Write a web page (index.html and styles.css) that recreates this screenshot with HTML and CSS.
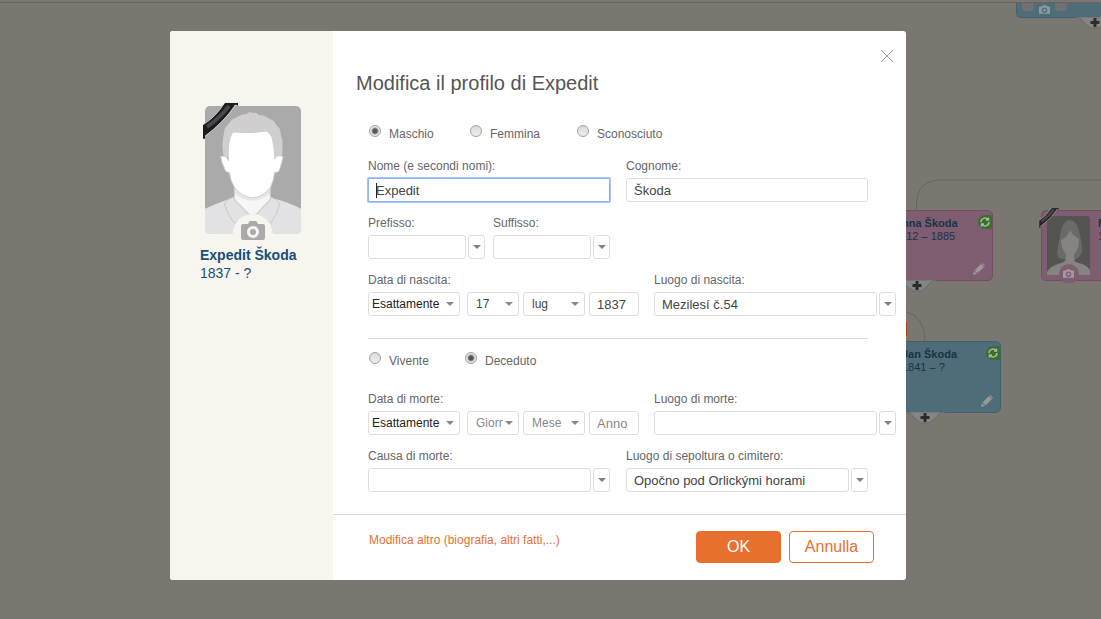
FILE: index.html
```html
<!DOCTYPE html>
<html lang="it">
<head>
<meta charset="utf-8">
<title>Modifica il profilo di Expedit</title>
<meta name="viewport" content="width=device-width, initial-scale=1">
<link rel="stylesheet" href="styles.css">
</head>
<body>
<svg class="defs" aria-hidden="true">
  <symbol id="camera" viewBox="0 0 24 19"><path fill-rule="evenodd" d="M2 3h5l1-2q.5-1 1.500-1h5q1 0 1.500 1l1 2h5q2 0 2 2v12q0 2-2 2H2q-2 0-2-2V5q0-2 2-2zM12 5a6 6 0 1 0 0 12a6 6 0 1 0 0-12zm0 3a3 3 0 1 1 0 6a3 3 0 1 1 0-6z"/></symbol>
  <symbol id="pencil" viewBox="0 0 12 12"><path d="M0 12l1-4 3 3zM1.600 7.300L8 .9l3 3-6.400 6.400zM8.600.4q.6-.6 1.200 0l1.800 1.800q.6.600 0 1.200z"/></symbol>
  <symbol id="plus" viewBox="0 0 40 12"><path class="tab" d="M0 0h40q-5 0-8 4t-8 7h-8q-5-3-8-7t-8-4z"/><path class="cross" d="M18.500 1h3v3h3v3h-3v3h-3v-3h-3v-3h3z"/></symbol>
  <symbol id="match" viewBox="0 0 14 14"><path class="badge" d="M7 0h5q2 0 2 2v12H7a7 7 0 0 1 0-14z"/><path class="arrows" d="M3 7a4 4 0 0 1 7-2.500M11 7a4 4 0 0 1-7 2.500M10.500 2.500v2.500H8M3.500 11.500V9H6"/></symbol>
  <symbol id="ribbon" viewBox="0 0 35 36"><path d="M22 0h13v3l-3-1Q20 20 2 33v3H0V22Q13 14 22 0z" fill="#1c1b1e"/><path d="M4 24Q17 15 26 3" fill="none" stroke="#47464a" stroke-width="4"/><path d="M21.500 0Q13 14 0 22M33 2Q20 20 2 33.500" fill="none" stroke="#d8d6d2" stroke-width=".8"/></symbol>
</svg>

<div class="tree" aria-hidden="true">
  <svg class="wires" width="1101" height="619">
    <path d="M0 2.500h1101M916.500 210v-5q0-25 25-25h160M906 311.500q19 5 19 30"/>
    <path class="mark" d="M906 322v14"/>
  </svg>
  <div class="node male top"><i></i><svg class="cam"><use href="#camera"/></svg><i></i><svg class="add"><use href="#plus"/></svg></div>
  <div class="node female anna"><b>Anna Škoda</b><span>1812 – 1885</span><svg class="sync"><use href="#match"/></svg><svg class="edit"><use href="#pencil"/></svg><svg class="add"><use href="#plus"/></svg></div>
  <div class="node male jan"><b>Jan Škoda</b><span>1841 – ?</span><svg class="sync"><use href="#match"/></svg><svg class="edit"><use href="#pencil"/></svg><svg class="add"><use href="#plus"/></svg></div>
  <div class="node female maria">
    <svg class="portrait" viewBox="0 0 62 76">
      <rect x="5" y="9" width="43" height="59" rx="3" fill="#545452"/>
      <path d="M17 51q-3-3-1-12t3-16q3-10 9-10t9 11q2 8 3 15t-2 10q-6 6-10 5t-11-3z" fill="#6b6a69"/>
      <path d="M5 65q3-6 14-9 5-1 5-5v-4q-5-6-5-14 7-3 9-10 2 5 9 9 0 11-5 15v5q0 3 5 4 8 2 11 7v5H5z" fill="#858482"/>
      <circle cx="27" cy="67" r="10" fill="#7e5d70"/>
      <svg x="21" y="62" width="11" height="9"><use href="#camera" fill="#a19a9e"/></svg>
    </svg>
    <svg class="mourning"><use href="#ribbon"/></svg>
    <b>M</b><span>1</span>
  </div>
</div>

<div class="overlay">
  <section class="dialog" role="dialog" aria-labelledby="title">
    <aside class="person">
      <svg class="avatar" viewBox="0 0 312 438" role="img" aria-label="Foto del profilo">
        <defs><clipPath id="frame"><rect x="15" y="18" width="288" height="384" rx="15"/></clipPath></defs>
        <g clip-path="url(#frame)">
          <rect width="312" height="438" fill="#aaa"/>
          <path d="M15 326q35-16 83-33l16-18h88l13 18q52 14 88 33v80H15z" fill="#e2e1e3"/>
          <path d="M103 250h108v44l-45 48q-8 8-17 0l-46-48z" fill="#f6f6f6"/>
          <path d="M103 262q25 33 55 33t53-33v18q-23 22-53 22t-55-22z" fill="#e6e6e6"/>
          <path d="M103 260v40l44 44-44 26q-20-25-30-58 8-15 26-21M211 260v40l-43 44 44 26q19-25 27-58-8-15-26-21" fill="none" stroke="#c8c8ca" stroke-width="3"/>
          <path d="M72 172q-8-28-2-62l4-24 12-15 10-12 20-10 8-5 15-2 10-6 8 2 12 1 8 6 16 2 15 9 13 6 10 16 9 9 3 20 4 13q3 30-3 54z" fill="#d0cecf"/>
          <path d="M104 96q50 5 97-3 9 8 15 18 6 24 9 66 2-14 24-8-3 18-9 36-3 14-16 12-3 26-13 46-25 30-53 30t-54-30q-13-20-16-46-12 1-14-10-9-18-12-38 19-3 23 13-3-60 12-84z" fill="#fff" stroke="#cfcdce" stroke-width="3"/>
        </g>
        <circle cx="158" cy="402" r="60" fill="#f8f5ee"/>
        <svg x="123" y="363" width="72" height="57"><use href="#camera" fill="#aaa"/></svg>
        <svg x="9" y="8" width="105" height="109"><use href="#ribbon"/></svg>
      </svg>
      <strong>Expedit Škoda</strong>
      <span>1837 - ?</span>
    </aside>

    <form class="main">
      <header class="head">
        <h1 id="title">Modifica il profilo di Expedit</h1>
        <button type="button" class="close" aria-label="Chiudi"><svg viewBox="0 0 14 14"><path d="M1 1l12 12M13 1L1 13"/></svg></button>
      </header>

      <div class="body">
        <div class="radios sex">
          <label><input type="radio" name="sex" checked><span>Maschio</span></label>
          <label><input type="radio" name="sex"><span>Femmina</span></label>
          <label><input type="radio" name="sex"><span>Sconosciuto</span></label>
        </div>

        <div class="row halves">
          <div class="field"><label for="first">Nome (e secondi nomi):</label><div class="control active"><input id="first" type="text" value="Expedit"></div></div>
          <div class="field"><label for="last">Cognome:</label><input id="last" type="text" value="Škoda"></div>
        </div>

        <div class="row halves">
          <div class="pair">
            <div class="field"><label for="prefix">Prefisso:</label><div class="combo"><input id="prefix" type="text"><button type="button" aria-label="Elenco prefissi"></button></div></div>
            <div class="field"><label for="suffix">Suffisso:</label><div class="combo"><input id="suffix" type="text"><button type="button" aria-label="Elenco suffissi"></button></div></div>
          </div>
        </div>

        <div class="row event">
          <div class="field"><label for="bkind">Data di nascita:</label>
            <div class="date">
              <div class="pick kind"><select id="bkind"><option>Esattamente</option></select></div>
              <div class="pick day"><select aria-label="Giorno"><option>17</option></select></div>
              <div class="pick month"><select aria-label="Mese"><option>lug</option></select></div>
              <input class="year" type="text" aria-label="Anno" value="1837">
            </div>
          </div>
          <div class="field place"><label for="bplace">Luogo di nascita:</label><div class="combo"><input id="bplace" type="text" value="Mezilesí č.54"><button type="button" aria-label="Elenco luoghi"></button></div></div>
        </div>

        <hr>

        <div class="radios life">
          <label><input type="radio" name="life"><span>Vivente</span></label>
          <label><input type="radio" name="life" checked><span>Deceduto</span></label>
        </div>

        <div class="row event">
          <div class="field"><label for="dkind">Data di morte:</label>
            <div class="date">
              <div class="pick kind"><select id="dkind"><option>Esattamente</option></select></div>
              <div class="pick day empty"><select aria-label="Giorno"><option>Giorno</option></select></div>
              <div class="pick month empty"><select aria-label="Mese"><option>Mese</option></select></div>
              <input class="year" type="text" aria-label="Anno" placeholder="Anno">
            </div>
          </div>
          <div class="field place"><label for="dplace">Luogo di morte:</label><div class="combo"><input id="dplace" type="text"><button type="button" aria-label="Elenco luoghi"></button></div></div>
        </div>

        <div class="row halves">
          <div class="field"><label for="cause">Causa di morte:</label><div class="combo"><input id="cause" type="text"><button type="button" aria-label="Elenco cause"></button></div></div>
          <div class="field"><label for="burial">Luogo di sepoltura o cimitero:</label><div class="combo"><input id="burial" type="text" value="Opočno pod Orlickými horami"><button type="button" aria-label="Elenco cimiteri"></button></div></div>
        </div>
      </div>

      <footer class="foot">
        <a href="#">Modifica altro (biografia, altri fatti,...)</a>
        <button type="button" class="btn ok">OK</button>
        <button type="button" class="btn">Annulla</button>
      </footer>
    </form>
  </section>
</div>
</body>
</html>
```
FILE: styles.css
```css
*, *::before, *::after { box-sizing: border-box; }

body {
  margin: 0;
  min-height: 100vh;
  overflow: hidden;
  background: #797770;
  color: #666;
  font: 12px/16px "Liberation Sans", Arial, sans-serif;
}

input, select, button { font: inherit; margin: 0; }
.defs { position: absolute; width: 0; height: 0; }

/* Family tree canvas behind the dialog */
.tree { position: absolute; inset: 0; overflow: hidden; }
.wires { position: absolute; left: 0; top: 0; fill: none; stroke: #66645f; }
.wires .mark { stroke: #9a4313; stroke-width: 2; }
.node {
  position: absolute;
  width: 170px;
  height: 71px;
  padding: 6px 0 0 70px;
  border: 1px solid;
  border-radius: 5px;
  color: #18334a;
  font-size: 11px;
  line-height: 13px;
  white-space: nowrap;
}
.node b, .node span { display: block; }
.male { background: #4f6d78; border-color: #3f626f; }
.female { background: #7e5d70; border-color: #704f62; }
.anna { left: 823px; top: 210px; }
.jan { left: 831px; top: 341px; height: 72px; }
.maria { left: 1041px; top: 210px; padding-left: 56px; }
.top { left: 1016px; top: 3px; height: 15px; padding: 0 0 0 5px; border-top: 0; border-radius: 0 0 5px 5px; display: flex; gap: 5px; }
.top i { width: 12px; height: 8px; background: #706f72; border-radius: 0 0 3px 3px; }
.top .cam { width: 11px; height: 9px; margin-top: 2px; fill: #8c9a9f; }
.sync { position: absolute; right: 0; top: 4px; width: 14px; height: 14px; }
.edit { position: absolute; right: 7px; bottom: 5px; width: 12px; height: 12px; fill: #99979a; }
.add { position: absolute; top: 100%; left: 73px; width: 40px; height: 12px; }
.top .add { left: 58px; }
.tab { fill: #868586; stroke: #6c6b69; }
.cross { fill: #2c2c2c; }
.badge { fill: #39702a; }
.arrows { fill: none; stroke: #aab5a3; stroke-width: 1.5; }
.portrait { position: absolute; left: 0; top: -4px; width: 62px; height: 76px; }
.mourning { position: absolute; left: -3px; top: -3px; width: 20px; height: 20px; opacity: .85; }

/* Dialog */
.overlay { position: relative; display: flex; justify-content: center; padding: 31px 25px 39px 0; }
.dialog { display: flex; width: 100%; max-width: 736px; background: #fff; border-radius: 3px; overflow: hidden; }

.person {
  display: flex;
  flex: 0 0 163px;
  flex-direction: column;
  padding: 69px 20px 0 30px;
  background: #f8f5ee;
  color: #14507d;
  font-size: 14px;
  line-height: 18px;
}
.avatar { width: 104px; height: 146px; }

.main { flex: 1; min-width: 0; }
.head { display: flex; justify-content: space-between; align-items: flex-start; padding: 18px 12px 0 23px; }
h1 { margin: 22px 0 0; color: #555; font-size: 20px; font-weight: 400; line-height: 24px; }
.close { width: 14px; height: 14px; padding: 0; border: 0; background: none; }
.close svg { display: block; fill: none; stroke: #999; }

.body { padding: 30px 38px 22px 35px; }
.radios { display: grid; padding-left: 1px; }
.sex { grid-template-columns: 101px 107px auto; }
.life { grid-template-columns: 96px auto; }
.radios label { display: flex; gap: 8px; }
.radios span { padding-top: 1px; }
.radios input {
  appearance: none;
  width: 12px;
  height: 12px;
  border: 1px solid #a2a2a2;
  border-radius: 50%;
  background: linear-gradient(#d9d9d9, #eee);
}
.radios input:checked { background: radial-gradient(circle, #555 0 2px, #e4e4e4 4px); }

.row { display: grid; margin-top: 13px; }
.sex + .row { margin-top: 16px; }
.life + .row { margin-top: 22px; }
.halves { grid-template-columns: 1fr 1fr; gap: 16px; }
.pair { display: grid; grid-template-columns: 1fr 1fr; gap: 8px; }
.event { grid-template-columns: 271px 1fr; gap: 15px; margin-right: -28px; }
.field { display: flex; flex-direction: column; gap: 4px; min-width: 0; }

.field input {
  width: 100%;
  min-width: 0;
  height: 24px;
  padding: 0 7px;
  border: 1px solid #ddd;
  border-radius: 3px;
  background: #fff;
  color: #444;
  font-size: 13px;
}
.field input::placeholder { color: #888; opacity: 1; }
.control { position: relative; }
.active input { border-color: #8db3f5; border-radius: 1px; box-shadow: 0 0 0 1px #a3c3fb; }
.active::before { content: ""; position: absolute; left: 8px; top: 5px; width: 1px; height: 15px; background: #222; }

.combo { display: flex; gap: 2px; }
.combo button { flex: 0 0 17px; height: 24px; padding: 0; border: 1px solid #ddd; border-radius: 3px; background: #fff; }
.combo button::before, .pick::after {
  content: "";
  display: block;
  width: 8px;
  height: 4px;
  margin: 0 auto;
  border: 4px solid transparent;
  border-top-color: #808080;
  border-bottom: 0;
}

.date { display: flex; gap: 4px; }
.pick { position: relative; }
.pick::after { position: absolute; right: 6px; top: 10px; pointer-events: none; border-top-color: #888; }
.kind { flex: 0 0 92px; margin-right: 3px; }
.day { flex: 0 0 52px; }
.month { flex: 0 0 62px; }
.pick select {
  appearance: none;
  display: block;
  width: 100%;
  height: 24px;
  padding: 0 15px 0 8px;
  border: 1px solid #ddd;
  border-radius: 3px;
  background: #fff;
  color: #444;
}
.pick.kind select { padding-left: 3px; color: #222; }
.pick.empty select { color: #888; }

hr { height: 1px; margin: 22px 0 13px; border: 0; background: #d8d8d8; }

.foot { display: flex; gap: 8px; padding: 16px 32px 17px 36px; border-top: 1px solid #d8d8d8; }
.foot a { margin: 1px auto 0 0; color: #e8702f; text-decoration: none; }
.btn { width: 85px; height: 32px; padding: 0; border: 1px solid #e8702f; border-radius: 4px; background: #fff; color: #e8702f; font-size: 16px; }
.ok { background: #e8702f; color: #fff; }
```
